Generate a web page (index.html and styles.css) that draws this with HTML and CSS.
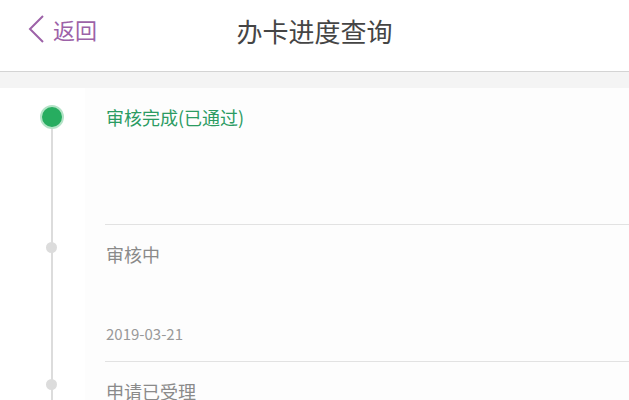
FILE: index.html
```html
<!DOCTYPE html>
<html lang="zh-CN">
<head>
<meta charset="utf-8">
<title>办卡进度查询</title>
<link rel="stylesheet" href="styles.css">
</head>
<body>
<header class="topbar">
  <a class="back" href="#">
    <svg class="back-icon" width="18" height="30" viewBox="0 0 18 30"><path d="M16 2 L3 15 L16 28" fill="none" stroke="#9d62a8" stroke-width="2"/></svg>
    <span class="back-text">返回</span>
  </a>
  <h1 class="title">办卡进度查询</h1>
</header>
<div class="band"></div>
<ul class="timeline">
  <li class="step step-done step-first">
    <div class="marker"><span class="dot dot-big"></span></div>
    <div class="body">
      <div class="inner">
        <div class="step-title">审核完成(已通过)</div>
      </div>
    </div>
  </li>
  <li class="step">
    <div class="marker"><span class="dot"></span></div>
    <div class="body">
      <div class="inner">
        <div class="step-title">审核中</div>
        <div class="step-date">2019-03-21</div>
      </div>
    </div>
  </li>
  <li class="step">
    <div class="marker"><span class="dot"></span></div>
    <div class="body">
      <div class="inner">
        <div class="step-title">申请已受理</div>
      </div>
    </div>
  </li>
</ul>
</body>
</html>
```
FILE: styles.css
```css
* { box-sizing: border-box; }
html, body { margin: 0; padding: 0; }
body {
  font-family: "Noto Sans CJK SC", "Noto Sans", sans-serif;
  background: #fff;
  width: 629px;
  height: 400px;
  overflow: hidden;
}
.topbar {
  height: 72px;
  border-bottom: 1px solid #d4d4d4;
  display: flex;
  align-items: center;
  justify-content: center;
  position: relative;
  background: #fff;
}
.back {
  position: absolute;
  left: 27px;
  top: 14px;
  display: flex;
  align-items: center;
  gap: 8px;
  text-decoration: none;
  color: #9d62a8;
}
.back-icon { display: block; }
.back-text { font-size: 22px; line-height: 30px; }
.title {
  margin: 0 0 10px 0;
  font-size: 26px;
  font-weight: 400;
  color: #454545;
  line-height: 34px;
}
.band {
  height: 16px;
  background: #f4f4f4;
}
.timeline {
  list-style: none;
  margin: 0;
  padding: 0;
}
.step {
  display: flex;
}
.marker {
  width: 85px;
  flex: none;
  background: linear-gradient(#dcdcdc, #dcdcdc) no-repeat 51px 0 / 2px 100%;
}
.step-first .marker {
  background-position: 51px 30px;
}
.dot {
  display: block;
  width: 11px;
  height: 11px;
  border-radius: 50%;
  background: #dcdcdc;
  margin: 17px 0 0 46px;
}
.dot-big {
  width: 24px;
  height: 24px;
  margin: 17px 0 0 40px;
  background: #27ad60;
  border: 2px solid #b4e3c7;
}
.body {
  flex: 1;
  background: #fdfdfd;
  padding-left: 20px;
}
.inner {
  min-height: 137px;
  border-bottom: 1px solid #e2e2e2;
  padding: 17px 0 17px 1px;
  display: flex;
  flex-direction: column;
  justify-content: space-between;
}
.step-title {
  font-size: 18px;
  line-height: 24px;
  color: #8a8a8a;
}
.step-done .step-title { color: #2b9b62; }
.step-date {
  font-size: 15px;
  line-height: 20px;
  color: #999;
}
```
